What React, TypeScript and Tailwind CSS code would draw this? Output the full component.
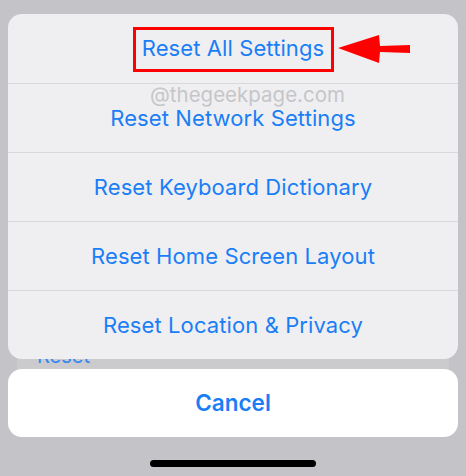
import React from 'react';

const OPTIONS = [
  'Reset All Settings',
  'Reset Network Settings',
  'Reset Keyboard Dictionary',
  'Reset Home Screen Layout',
  'Reset Location & Privacy',
];

const font = { fontFamily: 'Inter, "Liberation Sans", sans-serif' };

export default function App() {
  return (
    <div
      className="relative w-[466px] h-[476px] overflow-hidden bg-[#c4c3c8] px-2 pt-[14px]"
      style={font}
    >
      {/* dimmed settings card behind the sheet */}
      <div className="absolute left-[17px] right-[17px] top-[300px] h-[90px] bg-[#cbcacd] rounded-[10px]">
        <div className="absolute left-[20px] top-[46px] text-[20px] leading-none text-[#2f86f2]">
          Reset
        </div>
      </div>

      <div className="relative rounded-[14px] bg-[#efeff1] overflow-hidden">
        {OPTIONS.map((label, i) => (
          <div
            key={label}
            className={`flex h-[69px] items-center justify-center text-[22px] tracking-[0.1px] text-[#1a7ef6] ${
              i > 0 ? 'border-t border-[#d8d8db]' : ''
            }`}
          >
            {label}
          </div>
        ))}

        {/* highlight box */}
        <div className="absolute left-[125px] top-[13px] w-[201px] h-[45px] border-[3px] border-[#ff0000]" />

        {/* watermark */}
        <div className="absolute left-[142px] top-[66px] text-[20.5px] text-[#c6c6c9]">
          @thegeekpage.com
        </div>

        {/* arrow */}
        <svg
          className="absolute left-[330px] top-[20px]"
          width="74"
          height="30"
          viewBox="330 20 74 30"
        >
          <polygon
            points="330,34 371,21 372,32 402,31 402,39 372,38 371,49"
            fill="#ff0000"
          />
        </svg>
      </div>

      <div className="relative mt-[10px] flex h-[68px] items-center justify-center rounded-[14px] bg-white text-[22.5px] font-semibold text-[#1a7ef6]">
        Cancel
      </div>

      <div className="absolute left-[150px] top-[460px] h-[7px] w-[166px] rounded-full bg-black" />
    </div>
  );
}
